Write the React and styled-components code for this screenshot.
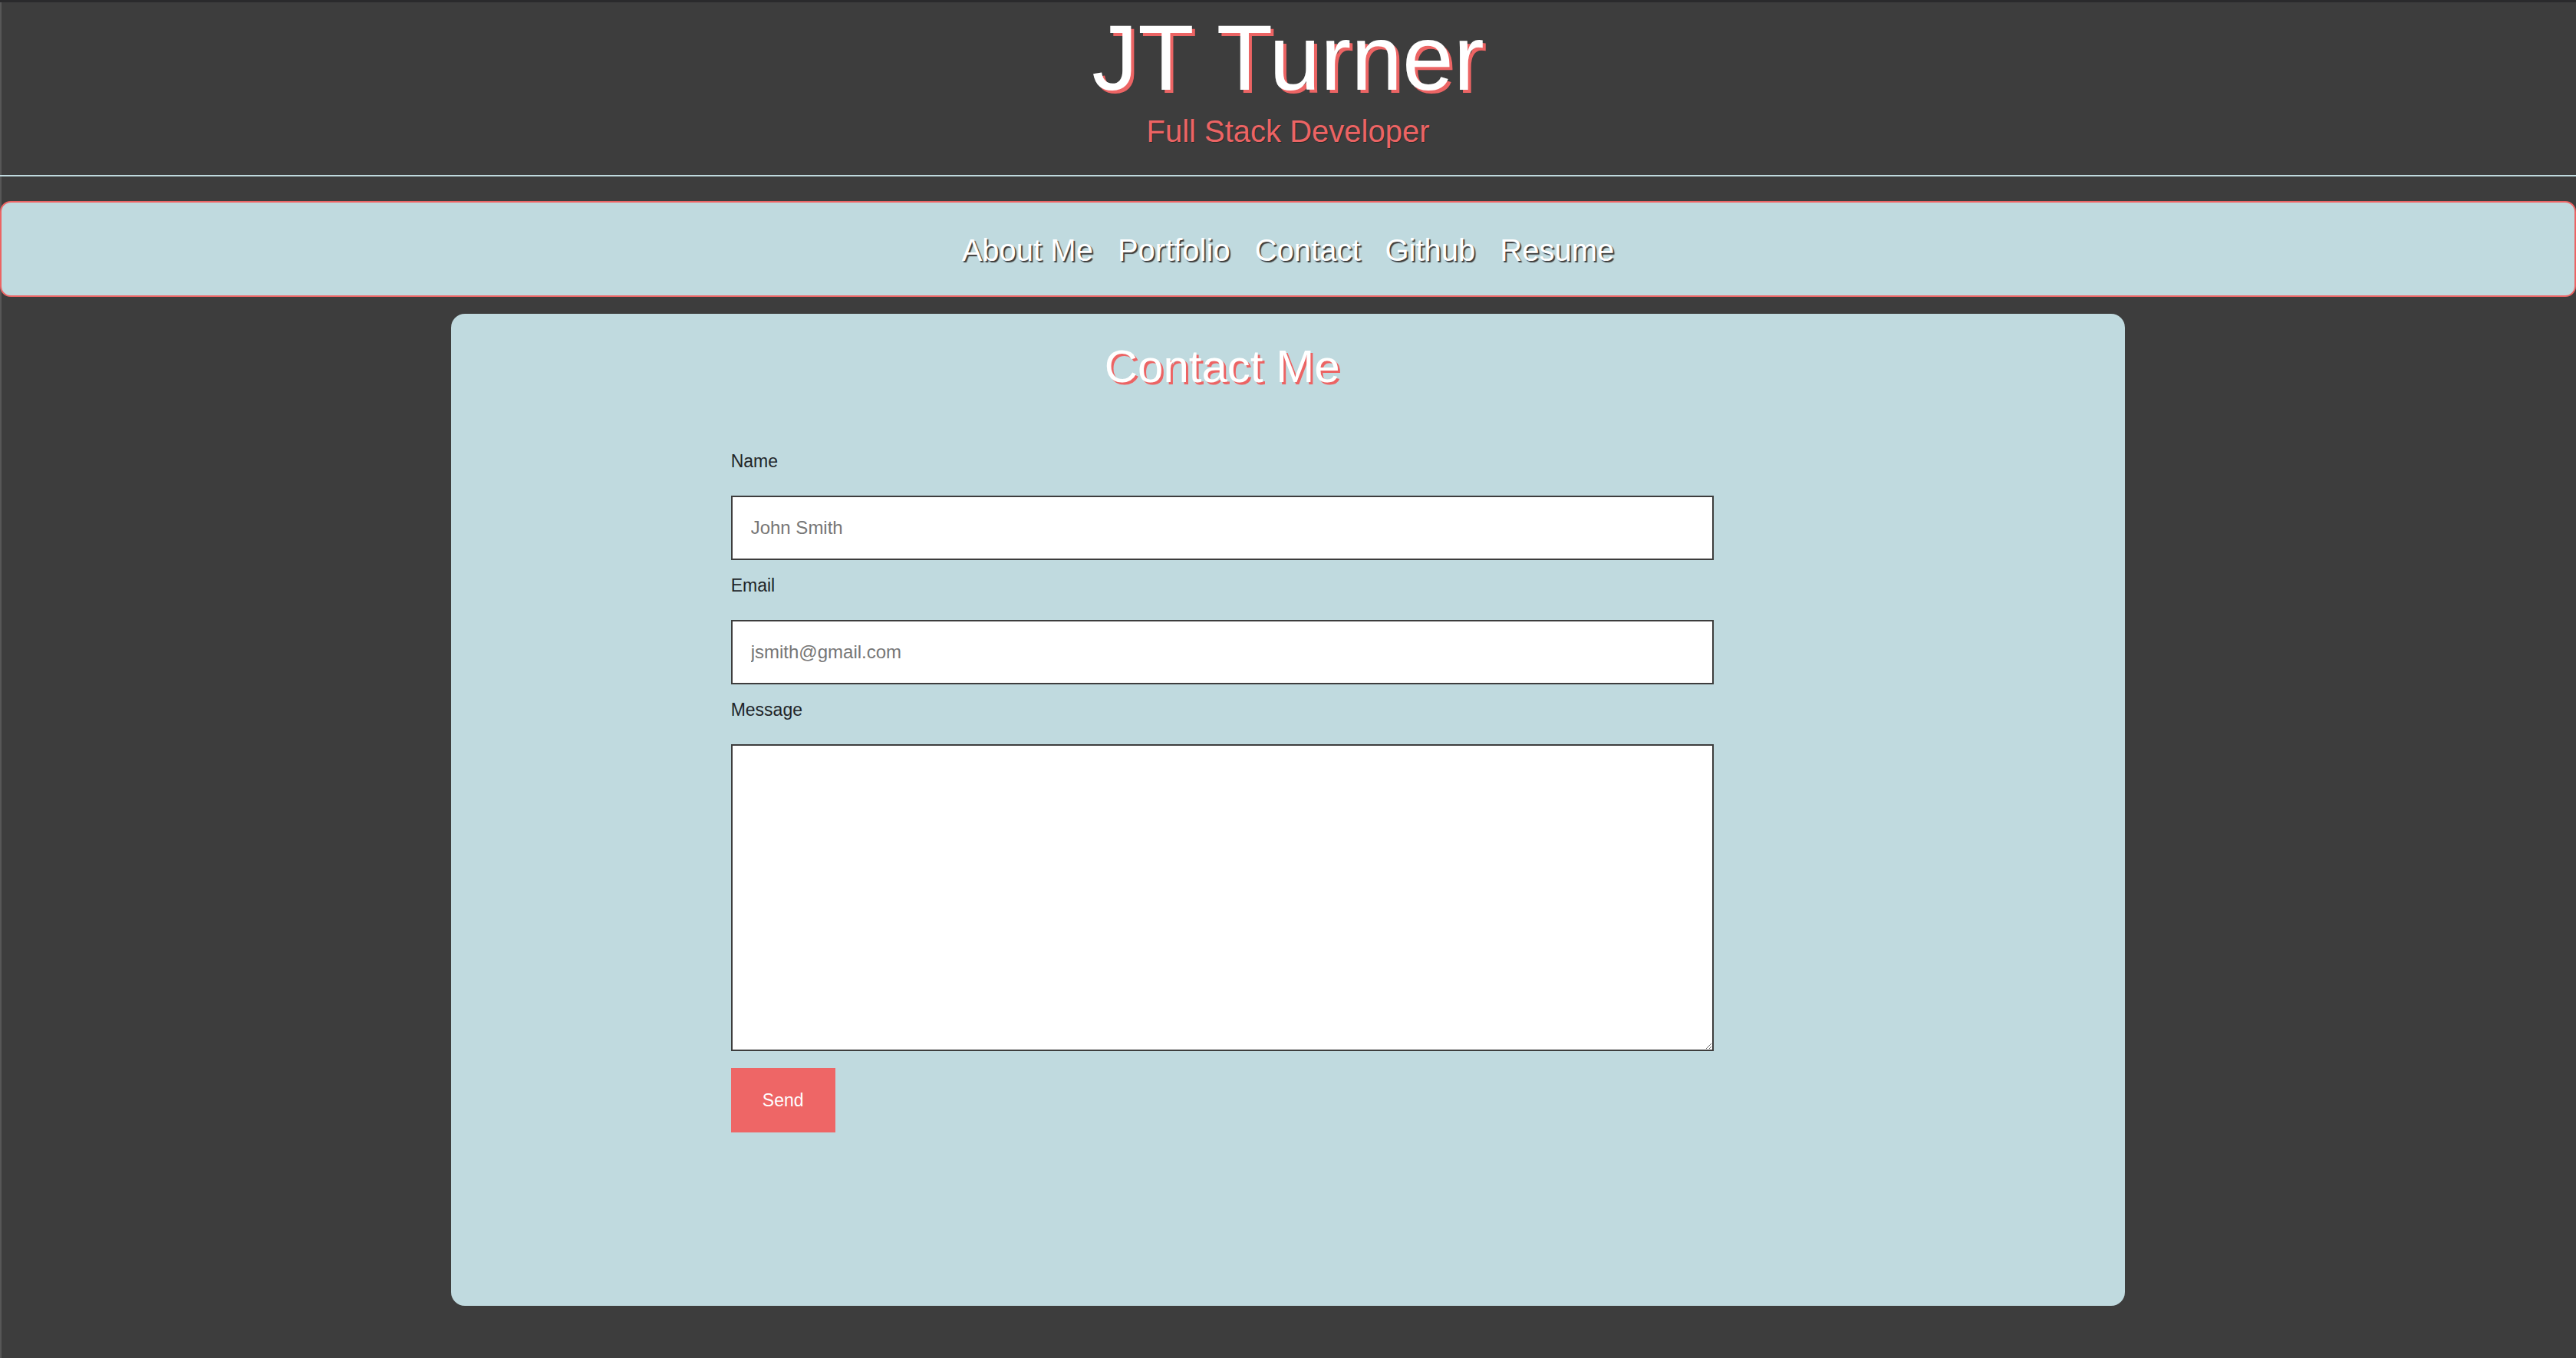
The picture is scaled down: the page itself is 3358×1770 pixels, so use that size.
import React from "react";
import styled, { createGlobalStyle } from "styled-components";

const GlobalStyle = createGlobalStyle`
  * {
    box-sizing: border-box;
  }
  body {
    margin: 0;
    background: #3d3d3d;
    font-family: "Liberation Sans", Arial, sans-serif;
  }
`;

const Page = styled.div`
  min-height: 1770px;
  background: #3d3d3d;
  border-top: 3px solid #2a2a2c;
  box-shadow: inset 2px 0 0 #575757;
`;

const HeaderWrapper = styled.header`
  padding: 3px 0 34px;
  text-align: center;
  border-bottom: 2px solid #c0dadf;
`;

const Title = styled.h1`
  margin: 0;
  font-size: 120px;
  font-weight: 400;
  line-height: 138px;
  color: #ffffff;
  text-shadow: 4px 4px 0 #ec6464;
`;

const Subtitle = styled.h2`
  margin: 4px 0 0;
  font-size: 40px;
  font-weight: 400;
  line-height: 46px;
  color: #ec6464;
  text-shadow: 1px 1px 0 rgba(0, 0, 0, 0.35);
`;

const Nav = styled.nav`
  margin-top: 32px;
  height: 125px;
  padding-top: 3px;
  display: flex;
  align-items: center;
  justify-content: center;
  background: #c0dadf;
  border: 2px solid #ec6464;
  border-radius: 14px;
`;

const NavList = styled.ul`
  display: flex;
  align-items: center;
  gap: 32px;
  margin: 0;
  padding: 0;
  list-style: none;
`;

const NavItem = styled.li`
  & a {
    font-size: 40px;
    color: #ffffff;
    text-decoration: none;
    text-shadow: 2px 2px 1px #3d3d3d;
  }
`;

const Card = styled.main`
  width: 65%;
  margin: 22px auto 0;
  padding: 33px 0 226px;
  background: #c0dadf;
  border-radius: 18px;
`;

const FormColumn = styled.section`
  margin-left: 365px;
  width: 1281px;
`;

const CardTitle = styled.h2`
  margin: 0;
  text-align: center;
  font-size: 60px;
  font-weight: 400;
  line-height: 72px;
  color: #ffffff;
  text-shadow: 3px 3px 0 #ec6464;
`;

const Form = styled.form`
  padding-top: 71px;
  display: flex;
  flex-direction: column;
  align-items: flex-start;
`;

const Label = styled.label`
  display: block;
  margin: ${(p) => (p.$first ? "2px" : "19px")} 0 31px;
  font-size: 23px;
  line-height: 28px;
  color: #212529;
`;

const Input = styled.input`
  width: 100%;
  height: 84px;
  padding: 0 24px;
  border: 2px solid #3d3d3d;
  background: #ffffff;
  font-family: "Liberation Sans", Arial, sans-serif;
  font-size: 24px;
  color: #212529;
  outline: none;
  &::placeholder {
    color: #767676;
  }
`;

const TextArea = styled.textarea`
  width: 100%;
  height: 400px;
  padding: 20px 24px;
  border: 2px solid #3d3d3d;
  background: #ffffff;
  font-family: "Liberation Sans", Arial, sans-serif;
  font-size: 24px;
  outline: none;
  display: block;
`;

const Button = styled.button`
  margin-top: 22px;
  width: 136px;
  height: 84px;
  border: none;
  background: #ee6666;
  color: #ffffff;
  font-family: "Liberation Sans", Arial, sans-serif;
  font-size: 23px;
  cursor: pointer;
`;

const links = ["About Me", "Portfolio", "Contact", "Github", "Resume"];

const App = () => {
  return (
    <>
      <GlobalStyle />
      <Page>
        <HeaderWrapper>
          <Title>JT Turner</Title>
          <Subtitle>Full Stack Developer</Subtitle>
        </HeaderWrapper>
        <Nav>
          <NavList>
            {links.map((l) => (
              <NavItem key={l}>
                <a href="/#">{l}</a>
              </NavItem>
            ))}
          </NavList>
        </Nav>
        <Card>
          <FormColumn>
            <CardTitle>Contact Me</CardTitle>
            <Form onSubmit={(e) => e.preventDefault()}>
              <Label $first htmlFor="name">Name</Label>
              <Input id="name" type="text" placeholder="John Smith" />
              <Label htmlFor="email">Email</Label>
              <Input id="email" type="email" placeholder="jsmith@gmail.com" />
              <Label htmlFor="message">Message</Label>
              <TextArea id="message" />
              <Button type="submit">Send</Button>
            </Form>
          </FormColumn>
        </Card>
      </Page>
    </>
  );
};

export default App;
